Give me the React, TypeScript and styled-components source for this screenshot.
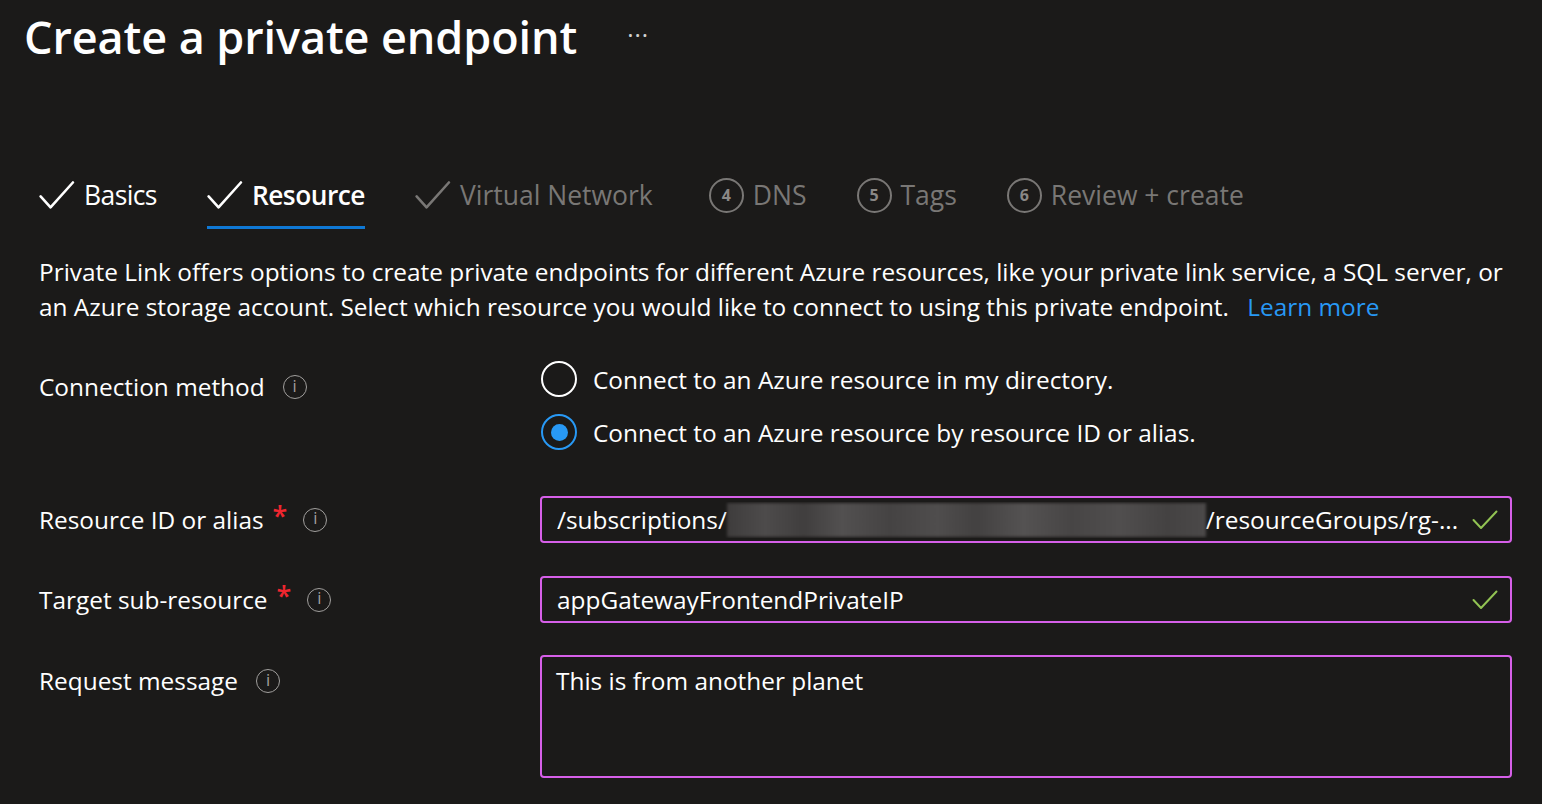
import styled, { createGlobalStyle } from "styled-components";

const GlobalStyle = createGlobalStyle`
  html, body {
    margin: 0;
    padding: 0;
    background: #1b1a19;
  }
  body {
    font-family: "Open Sans", "Noto Sans", sans-serif;
    color: #ffffff;
  }
`;

const Page = styled.div`
  width: 1542px;
  height: 804px;
  overflow: hidden;
  background: #1b1a19;
`;

const Header = styled.div`
  display: flex;
  align-items: center;
  padding: 9px 0 0 24px;
  height: 56px;
`;

const Title = styled.h1`
  margin: 0;
  font-size: 45px;
  font-weight: 600;
  line-height: 56px;
  letter-spacing: -0.1px;
`;

const More = styled.span`
  margin-left: 50px;
  font-size: 24px;
  line-height: 20px;
  letter-spacing: 1px;
  color: #d0d0d0;
  padding-bottom: 4px;
`;

const Content = styled.div`
  padding: 0 30px 0 39px;
`;

const Tabs = styled.div`
  display: flex;
  margin-top: 102px;
  gap: 50px;
`;

const TabItem = styled.div<{ $active?: boolean; $muted?: boolean; $after?: number }>`
  display: flex;
  align-items: center;
  gap: 9px;
  padding: 8px 0 11px;
  margin-right: ${(p) => p.$after ?? 0}px;
  line-height: 40px;
  font-size: ${(p) => (p.$active ? "26.3px" : "26.5px")};
  letter-spacing: ${(p) => (p.$active ? "-0.5px" : p.$muted ? "0" : "-0.6px")};
  font-weight: ${(p) => (p.$active ? 600 : 400)};
  color: ${(p) => (p.$muted ? "#797775" : "#ffffff")};
  border-bottom: 3px solid ${(p) => (p.$active ? "#0f78d4" : "transparent")};
`;

const StepNumber = styled.span`
  width: 31px;
  height: 31px;
  border: 2px solid #797775;
  border-radius: 50%;
  display: flex;
  align-items: center;
  justify-content: center;
  font-size: 16px;
  font-weight: 700;
  line-height: 1;
  color: #8a8886;
  letter-spacing: 0;
`;

const Description = styled.p`
  margin: 25px 0 0;
  width: 1476px;
  font-size: 24.4px;
  line-height: 35px;
`;

const Link = styled.a`
  color: #2899f5;
  margin-left: 12px;
  text-decoration: none;
`;

const Form = styled.div`
  display: flex;
  flex-direction: column;
`;

const Row = styled.div<{ $top: number; $align?: string }>`
  display: grid;
  grid-template-columns: 501px 972px;
  align-items: ${(p) => p.$align ?? "center"};
  margin-top: ${(p) => p.$top}px;
`;

const Label = styled.div<{ $offset?: number }>`
  display: flex;
  align-items: center;
  font-size: 24.4px;
  line-height: 36px;
  margin-top: ${(p) => p.$offset ?? 0}px;
`;

const Required = styled.span`
  color: #f0262f;
  font-size: 27px;
  font-weight: 600;
  margin-left: 9px;
  margin-top: -8px;
`;

const InfoIcon = styled.span<{ $gap?: number }>`
  margin-left: ${(p) => p.$gap ?? 18}px;
  width: 22px;
  height: 22px;
  border: 1.5px solid #a19f9d;
  border-radius: 50%;
  display: inline-flex;
  align-items: center;
  justify-content: center;
  font-family: "DejaVu Sans", sans-serif;
  font-size: 15px;
  line-height: 1;
  color: #a19f9d;
`;

const RadioGroup = styled.div`
  display: flex;
  flex-direction: column;
  gap: 9px;
`;

const RadioItem = styled.label`
  display: flex;
  align-items: center;
  height: 44px;
  gap: 16px;
  font-size: 24.4px;
`;

const RadioCircle = styled.span<{ $checked?: boolean }>`
  width: 32px;
  height: 32px;
  box-sizing: content-box;
  border: 2px solid ${(p) => (p.$checked ? "#2899f5" : "#ffffff")};
  border-radius: 50%;
  margin-left: 1px;
  display: flex;
  align-items: center;
  justify-content: center;
  &::after {
    content: "";
    display: ${(p) => (p.$checked ? "block" : "none")};
    width: 17px;
    height: 17px;
    border-radius: 50%;
    background: #2899f5;
  }
`;

const Field = styled.div<{ $tall?: boolean }>`
  box-sizing: border-box;
  height: ${(p) => (p.$tall ? 123 : 47)}px;
  border: 2px solid #d65fe8;
  border-radius: 4px;
  display: flex;
  align-items: ${(p) => (p.$tall ? "flex-start" : "center")};
  padding: ${(p) => (p.$tall ? "6px 14px" : "0 12px 0 15px")};
  font-size: 24.4px;
  line-height: 36px;
`;

const FieldText = styled.span`
  flex: 1;
  display: flex;
  align-items: center;
  white-space: nowrap;
  overflow: hidden;
`;

const Redacted = styled.span`
  display: inline-block;
  flex: none;
  width: 479px;
  height: 34px;
  background: linear-gradient(
    90deg,
    #3e3c3c 0%,
    #4d4b4b 8%,
    #403e3e 16%,
    #525050 24%,
    #454343 34%,
    #4f4d4d 44%,
    #434141 52%,
    #545252 62%,
    #474545 72%,
    #504e4e 82%,
    #444242 92%,
    #4b4949 100%
  );
  filter: blur(1.5px);
`;

const Check = ({ color, size = 36 }: { color: string; size?: number }) => (
  <svg width={size} height={size * 0.8} viewBox="0 0 36 29" fill="none">
    <path d="M1.5 15.5 L11.5 26.5 L34 1.5" stroke={color} strokeWidth="2.6" strokeLinecap="round" strokeLinejoin="round" />
  </svg>
);

const ValidIcon = () => (
  <svg width="26" height="20" viewBox="0 0 26 20" fill="none">
    <path d="M1.5 10 L9 18 L24.5 1.5" stroke="#92c353" strokeWidth="2" strokeLinecap="round" strokeLinejoin="round" />
  </svg>
);

const Info = ({ gap }: { gap?: number }) => <InfoIcon $gap={gap}>i</InfoIcon>;

const App = () => {
  return (
    <Page>
      <GlobalStyle />
      <Header>
        <Title>Create a private endpoint</Title>
        <More>···</More>
      </Header>
      <Content>
        <Tabs>
          <TabItem>
            <Check color="#ffffff" />
            Basics
          </TabItem>
          <TabItem $active>
            <Check color="#ffffff" />
            Resource
          </TabItem>
          <TabItem $muted $after={6}>
            <Check color="#797775" />
            Virtual Network
          </TabItem>
          <TabItem $muted>
            <StepNumber>4</StepNumber>
            DNS
          </TabItem>
          <TabItem $muted>
            <StepNumber>5</StepNumber>
            Tags
          </TabItem>
          <TabItem $muted>
            <StepNumber>6</StepNumber>
            Review + create
          </TabItem>
        </Tabs>
        <Description>
          Private Link offers options to create private endpoints for different Azure resources, like your private link
          service, a SQL server, or an Azure storage account. Select which resource you would like to connect to using
          this private endpoint. <Link>Learn more</Link>
        </Description>
        <Form>
          <Row $top={33} $align="start">
            <Label $offset={12}>
              Connection method
              <Info />
            </Label>
            <RadioGroup>
              <RadioItem>
                <RadioCircle />
                Connect to an Azure resource in my directory.
              </RadioItem>
              <RadioItem>
                <RadioCircle $checked />
                Connect to an Azure resource by resource ID or alias.
              </RadioItem>
            </RadioGroup>
          </Row>
          <Row $top={42}>
            <Label>
              Resource ID or alias
              <Required>*</Required>
              <Info gap={16} />
            </Label>
            <Field>
              <FieldText>
                /subscriptions/
                <Redacted />
                /resourceGroups/rg-...
              </FieldText>
              <ValidIcon />
            </Field>
          </Row>
          <Row $top={33}>
            <Label>
              Target sub-resource
              <Required>*</Required>
              <Info gap={16} />
            </Label>
            <Field>
              <FieldText>appGatewayFrontendPrivateIP</FieldText>
              <ValidIcon />
            </Field>
          </Row>
          <Row $top={32} $align="start">
            <Label $offset={8}>
              Request message
              <Info />
            </Label>
            <Field $tall>This is from another planet</Field>
          </Row>
        </Form>
      </Content>
    </Page>
  );
};

export default App;
